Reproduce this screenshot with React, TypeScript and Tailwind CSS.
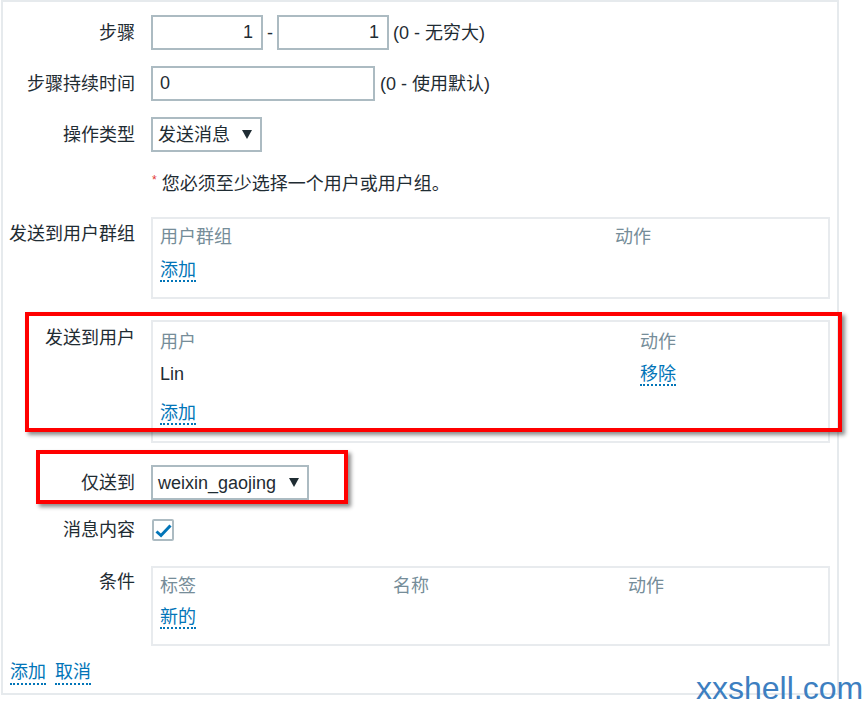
import React from 'react'

const label = 'w-[132px] shrink-0 text-right'
const link = 'border-b-2 border-dotted border-[#0275b8] text-[#0275b8]'

function Arrow() {
  return (
    <svg width="10" height="9" viewBox="0 0 10 9" className="shrink-0">
      <path d="M0 0h10L5 9z" fill="#1f2c33" />
    </svg>
  )
}

export default function App() {
  return (
    <div className="relative min-h-[702px] overflow-hidden bg-white font-['Liberation_Sans','Noto_Sans_CJK_SC',sans-serif] text-[18px] leading-[22px] text-[#1f2c33]">
      <div className="ml-[1px] w-[838px] border-2 border-[#e6eaed] pt-[13px] pb-[8px]">
        {/* step */}
        <div className="flex h-[35px] items-center">
          <div className={label}>步骤</div>
          <div className="ml-[16px] flex items-center">
            <input readOnly defaultValue="1" className="h-[35px] w-[112px] border-2 border-[#acbbc2] pr-[8px] text-right outline-none" />
            <span className="mx-[4px]">-</span>
            <input readOnly defaultValue="1" className="h-[35px] w-[112px] border-2 border-[#acbbc2] pr-[8px] text-right outline-none" />
            <span className="ml-[4px]">(0 - 无穷大)</span>
          </div>
        </div>

        {/* step duration */}
        <div className="mt-[16px] flex h-[35px] items-center">
          <div className={label}>步骤持续时间</div>
          <div className="ml-[16px] flex items-center">
            <input readOnly defaultValue="0" className="h-[35px] w-[224px] border-2 border-[#acbbc2] pl-[7px] outline-none" />
            <span className="ml-[5px]">(0 - 使用默认)</span>
          </div>
        </div>

        {/* operation type */}
        <div className="mt-[16px] flex h-[35px] items-center">
          <div className={label}>操作类型</div>
          <div className="ml-[16px] flex h-[35px] w-[111px] items-center justify-between border-2 border-[#acbbc2] pl-[5px] pr-[8px]">
            <span>发送消息</span>
            <Arrow />
          </div>
        </div>

        {/* required notice */}
        <div className="mt-[21px] flex">
          <div className={label}></div>
          <div className="ml-[17px] flex items-start">
            <span className="mt-[1px] text-[12px] leading-[12px] text-[#e33734]">*</span>
            <span className="ml-[5px]">您必须至少选择一个用户或用户组。</span>
          </div>
        </div>

        {/* user groups */}
        <div className="mt-[22px] flex">
          <div className={`${label} pt-[6px]`}>发送到用户群组</div>
          <div className="ml-[16px] h-[82px] w-[679px] border-2 border-[#e8ebee] px-[7px] pt-[7px]">
            <div className="grid grid-cols-[455px_1fr] text-[#768d99]">
              <span>用户群组</span>
              <span>动作</span>
            </div>
            <div className="mt-[11px]">
              <span className={link}>添加</span>
            </div>
          </div>
        </div>

        {/* users */}
        <div className="mt-[21px] flex">
          <div className={`${label} pt-[7px]`}>发送到用户</div>
          <div className="ml-[16px] h-[123px] w-[679px] border-2 border-[#e8ebee] px-[7px] pt-[9px]">
            <div className="grid grid-cols-[480px_1fr] text-[#768d99]">
              <span>用户</span>
              <span>动作</span>
            </div>
            <div className="mt-[10px] grid grid-cols-[480px_1fr]">
              <span>Lin</span>
              <span>
                <span className={link}>移除</span>
              </span>
            </div>
            <div className="mt-[17px]">
              <span className={link}>添加</span>
            </div>
          </div>
        </div>

        {/* send only to */}
        <div className="mt-[22px] flex h-[35px] items-center">
          <div className={label}>仅送到</div>
          <div className="ml-[16px] flex h-[35px] w-[158px] items-center justify-between border-2 border-[#acbbc2] pl-[5px] pr-[8px]">
            <span>weixin_gaojing</span>
            <Arrow />
          </div>
        </div>

        {/* message content */}
        <div className="mt-[19px] flex h-[22px] items-center">
          <div className={label}>消息内容</div>
          <div className="ml-[17px] flex h-[22px] w-[22px] items-center justify-center rounded-[2px] border-2 border-[#acbbc2]">
            <svg width="18" height="18" viewBox="0 0 18 18">
              <path d="M2.5 10.5l4.5 4 9.5-10" fill="none" stroke="#0275b8" strokeWidth="3" />
            </svg>
          </div>
        </div>

        {/* conditions */}
        <div className="mt-[25px] flex">
          <div className={`${label} pt-[5px]`}>条件</div>
          <div className="ml-[16px] h-[80px] w-[679px] border-2 border-[#e8ebee] px-[7px] pt-[7px]">
            <div className="grid grid-cols-[233px_235px_1fr] text-[#768d99]">
              <span>标签</span>
              <span>名称</span>
              <span>动作</span>
            </div>
            <div className="mt-[9px]">
              <span className={link}>新的</span>
            </div>
          </div>
        </div>

        {/* buttons */}
        <div className="mt-[15px] flex gap-[9px] pl-[7px]">
          <span className={link}>添加</span>
          <span className={link}>取消</span>
        </div>
      </div>

      {/* annotation boxes */}
      <div className="pointer-events-none absolute left-[25px] top-[312px] h-[120px] w-[817px] border-4 border-[#ff0000] shadow-[3px_3px_4px_rgba(0,0,0,0.45)]" />
      <div className="pointer-events-none absolute left-[36px] top-[450px] h-[54px] w-[312px] border-4 border-[#ff0000] shadow-[3px_3px_4px_rgba(0,0,0,0.45)]" />

      {/* watermark */}
      <div className="pointer-events-none absolute left-[696px] top-[674px] text-[32px] leading-[28px] text-[#3d7fc1]">
        xxshell.com
      </div>
    </div>
  )
}
